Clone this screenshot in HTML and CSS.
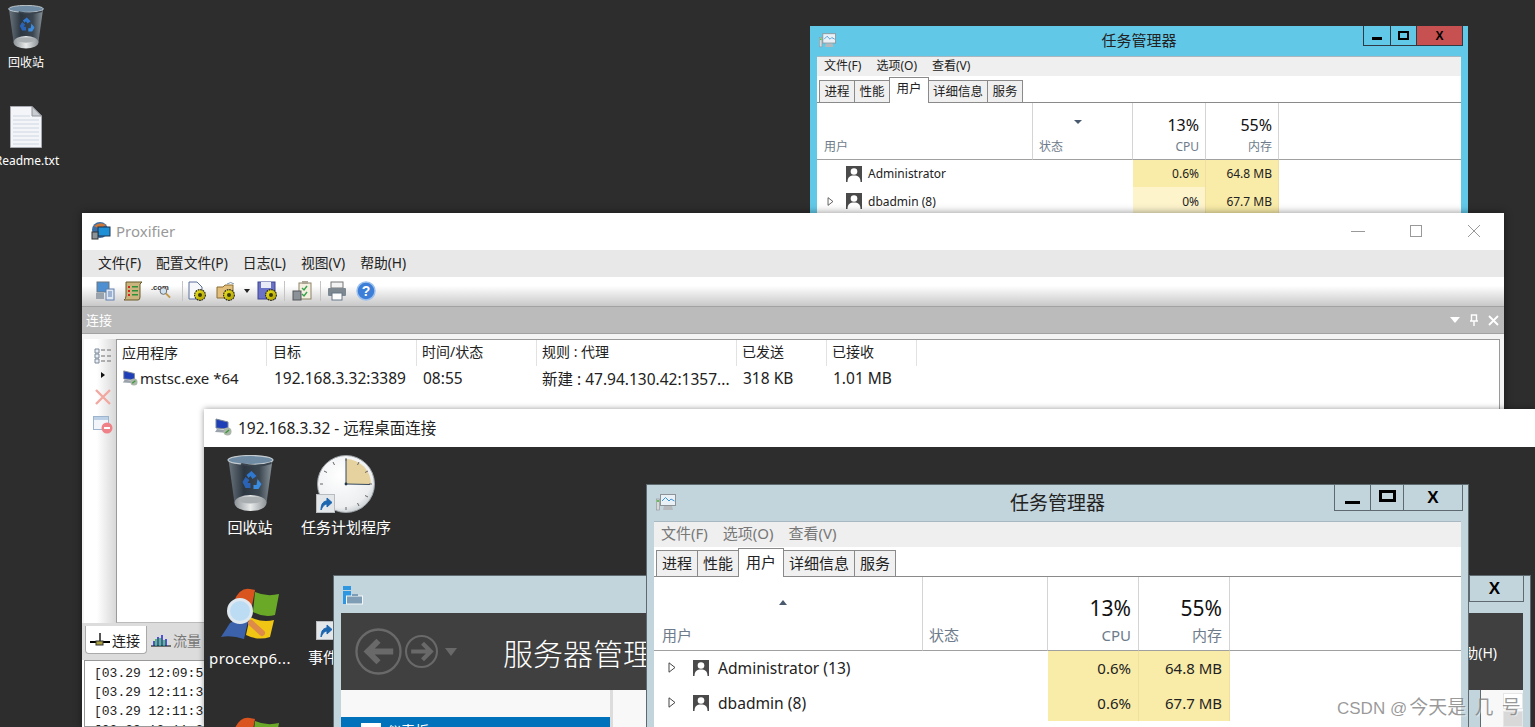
FILE: index.html
```html
<!DOCTYPE html>
<html lang="en">
<head>
    <meta charset="UTF-8">
    <title>远程桌面</title>
    <link rel="stylesheet" href="styles.css">
</head>
<body>
<!-- shared icons -->
<svg class="defs" width="0" height="0">
    <defs>
        <linearGradient id="binBody" x1="0" x2="1" y1="0" y2="0">
            <stop offset="0" stop-color="#6a757e"/><stop offset=".35" stop-color="#2c3640"/><stop offset=".7" stop-color="#3c4650"/><stop offset="1" stop-color="#8a949b"/>
        </linearGradient>
        <linearGradient id="binBase" x1="0" x2="1" y1="0" y2="0">
            <stop offset="0" stop-color="#8d9397"/><stop offset=".5" stop-color="#e9ebeb"/><stop offset="1" stop-color="#8d9397"/>
        </linearGradient>
        <radialGradient id="clockFace" cx=".4" cy=".35" r=".8">
            <stop offset="0" stop-color="#fff"/><stop offset=".7" stop-color="#eceef0"/><stop offset="1" stop-color="#aeb4b9"/>
        </radialGradient>
        <linearGradient id="gearFill" x1="0" x2="1" y1="0" y2="1">
            <stop offset="0" stop-color="#f2ea20"/><stop offset="1" stop-color="#a89a00"/>
        </linearGradient>
        <symbol id="i-bin" viewBox="0 0 46 58">
            <path d="M1 5 L7 48 Q23 60 39 48 L45 5 Z" fill="url(#binBody)"/>
            <ellipse cx="23" cy="48" rx="16" ry="8" fill="url(#binBase)"/>
            <ellipse cx="23" cy="45" rx="12" ry="3.500" fill="#a9aeb1"/>
            <ellipse cx="23" cy="5" rx="22.500" ry="4.500" fill="#6f8ba3" stroke="#c4cbd0" stroke-width="1.200"/>
            <path d="M14 8 Q30 12 44 7 L44 9 Q30 14 13 10 Z" fill="#39444e"/>
            <path d="M19 20 l5 -4 l5 5 l-4 3 l-2 -3 l-2 2 Z" fill="#2f78cf"/>
            <path d="M15 27 l3 -5 l4 3 l-2 3 l3 0 l0 5 l-5 0 Z" fill="#2a63b5"/>
            <path d="M30 24 l4 5 l-3 5 l-5 0 l0 -4 l3 0 Z" fill="#3a8ce0"/>
        </symbol>
        <symbol id="i-clock" viewBox="0 0 58 58">
            <circle cx="29" cy="29" r="28.500" fill="url(#clockFace)" stroke="#9aa0a4"/>
            <path d="M29 4 A25 25 0 0 1 54 29 L29 29 Z" fill="#e6d29e"/>
            <path d="M29 29 L29 4 M29 29 L53 29.500" stroke="#33495c" stroke-width="1" fill="none"/>
            <path d="M29 3v3M29 52v3M3 29h3M52 29h3M16 7l1.500 3M42 7l-1.500 3M7 16l3 1.500M51 16l-3 1.500M7 42l3-1.500M51 42l-3-1.500M16 51l1.500-3M42 51l-1.500-3" stroke="#666" stroke-width="1"/>
            <circle cx="29" cy="29" r="1.400" fill="#22384a"/>
        </symbol>
        <symbol id="i-shortcut" viewBox="0 0 19 19">
            <rect x=".5" y=".5" width="18" height="18" fill="#e4e7ea" stroke="#b8bcc0"/>
            <path d="M5 16 C5 9 8 7 11 7 L11 4 L16 8.500 L11 13 L11 10 C8.500 10 7 12 5 16 Z" fill="#1d66b0" stroke="#1d66b0"/>
        </symbol>
        <symbol id="i-procexp" viewBox="0 0 60 54">
            <path d="M10 36 Q20 30 28 34 L24 52 Q12 48 1 50 Z" fill="#3b62ab"/>
            <path d="M14 14 Q20 0 30 2 Q36 3 35 3 L31 24 Q22 20 12 26 Z" fill="#d9541f"/>
            <path d="M35 5 Q46 10 59 7 L55 28 Q44 31 33 25 Z" fill="#69a927"/>
            <path d="M30 30 Q42 36 54 33 L50 50 Q38 54 26 48 Z" fill="#f0c513"/>
            <circle cx="20" cy="24" r="11.500" fill="#bcdcf4" stroke="#dfe8ee" stroke-width="3"/>
            <path d="M31 36 L42 46" stroke="#dd8a4a" stroke-width="6" stroke-linecap="round"/>
        </symbol>
        <symbol id="i-user" viewBox="0 0 16 16">
            <rect width="16" height="16" fill="#4a4a4a"/>
            <circle cx="8" cy="5.500" r="3.300" fill="#fff"/>
            <path d="M1.500 16 C1.500 11 4 9.500 8 9.500 C12 9.500 14.500 11 14.500 16 Z" fill="#fff"/>
        </symbol>
        <symbol id="i-taskmgr" viewBox="0 0 20 17">
            <rect x="4.500" y=".5" width="15" height="11" fill="#e9f1f6" stroke="#8c9296"/>
            <path d="M6 7 L9.500 3.500 L13 7 L15 5 L18.500 7" stroke="#3b95d6" fill="none"/>
            <rect x=".5" y="5" width="3" height="11" fill="#d8d8d8" stroke="#8c9296" stroke-width=".6"/>
            <rect x="1" y="6" width="2" height="2" fill="#5cc24a"/>
            <path d="M8 12h8l1 4H7z" fill="#b5b9bc"/>
        </symbol>
        <symbol id="i-rdp" viewBox="0 0 18 18">
            <path d="M2 1 L14 4 L14 11 L2 10 Z" fill="#1f3fb8" stroke="#7b8794"/>
            <path d="M3 11 L13 12 L15 15 L1 14 Z" fill="#9aa3ab"/>
            <circle cx="13.500" cy="13.500" r="4" fill="#aab6a8"/>
            <path d="M11.500 15 L15 12" stroke="#3d9a3a" stroke-width="1.400"/>
        </symbol>
        <symbol id="i-chev" viewBox="0 0 8 11">
            <path d="M1 .8 L7 5.500 L1 10.200 Z" fill="#fff" stroke="#444" stroke-width="1"/>
        </symbol>
        <symbol id="i-gear-badge" viewBox="0 0 12 12">
            <circle cx="6" cy="6" r="5.400" fill="url(#gearFill)" stroke="#222" stroke-width="1.100" stroke-dasharray="1.700 .8"/>
            <circle cx="6" cy="6" r="2" fill="#3a3a10"/>
        </symbol>
    </defs>
</svg>

<div class="desktop">
    <!-- host desktop -->
    <div class="desk-icon host-bin">
        <svg class="ico-bin-sm"><use href="#i-bin"/></svg>
        <span class="desk-label">回收站</span>
    </div>
    <div class="desk-icon host-readme">
        <svg class="ico-file" viewBox="0 0 32 42">
            <path d="M.5 .5 H22 L31.500 10 V41.500 H.5 Z" fill="#f3f5f8" stroke="#a8acb2"/>
            <path d="M22 .5 V10 H31.500 Z" fill="#c9ccd1" stroke="#8e9298"/>
            <path d="M3 10H20M3 14H29M3 18H29M3 22H29M3 26H29M3 30H29M3 34H29M3 38H29" stroke="#cfd6e2"/>
        </svg>
        <span class="desk-label">Readme.txt</span>
    </div>

    <!-- task manager on the host, mostly hidden -->
    <div class="tm tm-small tm-host">
        <div class="tm-title">
            <svg class="tm-ico"><use href="#i-taskmgr"/></svg>
            <span class="tm-name">任务管理器</span>
            <div class="tm-btns">
                <span class="tm-btn tm-min"><i class="glyph-min"></i></span>
                <span class="tm-btn tm-max"><i class="glyph-max"></i></span>
                <span class="tm-btn tm-close">X</span>
            </div>
        </div>
        <div class="tm-body">
            <div class="tm-menu"><span>文件(F)</span><span>选项(O)</span><span>查看(V)</span></div>
            <div class="tm-tabs">
                <span class="tm-tab">进程</span><span class="tm-tab">性能</span><span class="tm-tab on">用户</span><span class="tm-tab">详细信息</span><span class="tm-tab">服务</span>
            </div>
            <div class="tm-grid">
                <div class="th th-user"><i class="sort-down"></i><em>用户</em></div>
                <div class="th th-status"><em>状态</em></div>
                <div class="th th-num"><b>13%</b><em>CPU</em></div>
                <div class="th th-num"><b>55%</b><em>内存</em></div>
                <div class="th th-end"></div>

                <div class="td td-user"><span class="chev-gap"></span><svg class="ico-user"><use href="#i-user"/></svg>Administrator</div>
                <div class="td"></div>
                <div class="td td-num heat">0.6%</div>
                <div class="td td-num heat">64.8 MB</div>
                <div class="td"></div>

                <div class="td td-user"><svg class="ico-chev"><use href="#i-chev"/></svg><svg class="ico-user"><use href="#i-user"/></svg>dbadmin (8)</div>
                <div class="td"></div>
                <div class="td td-num heat-low">0%</div>
                <div class="td td-num heat">67.7 MB</div>
                <div class="td"></div>
            </div>
        </div>
    </div>

    <!-- Proxifier -->
    <div class="px">
        <div class="px-title">
            <svg class="px-logo" viewBox="0 0 20 18">
                <circle cx="9" cy="8" r="8" fill="#3a6ea5"/>
                <path d="M3 4 Q9 -1 15 3 L9 7 Z" fill="#c8763a"/>
                <rect x="7" y="5" width="12" height="9" fill="#1c8fd6" stroke="#1f3550"/>
                <rect x="1" y="10" width="6" height="7" fill="#8d9499" stroke="#333"/>
            </svg>
            <span class="px-name">Proxifier</span>
            <div class="px-ctrl">
                <svg viewBox="0 0 14 14"><path d="M0 7.500H14" stroke="#999"/></svg>
                <svg viewBox="0 0 14 14"><rect x="1.500" y="1.500" width="11" height="11" fill="none" stroke="#999"/></svg>
                <svg viewBox="0 0 14 14"><path d="M1 1L13 13M13 1L1 13" stroke="#999"/></svg>
            </div>
        </div>
        <div class="px-menu"><span>文件(F)</span><span>配置文件(P)</span><span>日志(L)</span><span>视图(V)</span><span>帮助(H)</span></div>
        <div class="px-tools">
            <svg class="tool" viewBox="0 0 20 20"><rect x="2" y="1" width="12" height="10" fill="#4d8fd0" stroke="#6b7680"/><rect x="1" y="12" width="8" height="6" fill="#9aa3ab"/><rect x="11" y="8" width="8" height="11" fill="#dfe7f2" stroke="#5f7fb0"/><path d="M13 11h4M13 13h4M13 15h4" stroke="#5f7fb0"/></svg>
            <svg class="tool" viewBox="0 0 20 20"><path d="M3 1H19L17 3V16Q17 19 15 19H1Q3 18 3 15Z" fill="#c9b57d" stroke="#6a5a2a"/><path d="M5 5h2v2H5zM5 9h2v2H5zM5 13h2v2H5z" fill="#d9261c"/><path d="M9 5h6v1.500H9zM9 9h6v1.500H9zM9 13h6v1.500H9z" fill="#2f8f3a"/></svg>
            <svg class="tool tool-wide" viewBox="0 0 22 20"><text x="0" y="9" class="tool-text">.com</text><circle cx="13" cy="10" r="3.500" fill="#cfe2f2" stroke="#666"/><path d="M15.500 12.500L20 17" stroke="#c29a4a" stroke-width="2"/></svg>
            <i class="tool-sep sep-a"></i>
            <svg class="tool" viewBox="0 0 20 20"><path d="M3 1H11L16 6V18H3Z" fill="#f5f7fb" stroke="#5b6f9a"/><use href="#i-gear-badge" x="8" y="8" width="12" height="12"/></svg>
            <svg class="tool tool-folder" viewBox="0 0 20 20"><path d="M1 6H7L9 4H17V17H1Z" fill="#e2bf7a" stroke="#8a6d35"/><path d="M11 3Q15 0 18 3" stroke="#7f93a8" fill="none"/><use href="#i-gear-badge" x="7" y="8" width="12" height="12"/></svg>
            <i class="tool-drop"></i>
            <svg class="tool" viewBox="0 0 20 20"><rect x="1" y="1" width="17" height="17" fill="#6a72c8" stroke="#3c4390"/><rect x="4" y="1" width="10" height="6" fill="#e8eaf6"/><use href="#i-gear-badge" x="8" y="8" width="12" height="12"/></svg>
            <i class="tool-sep sep-b"></i>
            <svg class="tool" viewBox="0 0 20 20"><rect x="7" y="2" width="12" height="16" fill="#f4efe0" stroke="#8a8266"/><rect x="10" y="0" width="6" height="3" fill="#a9a493"/><path d="M10 7l2 2 3-4M10 13l2 2 3-4" stroke="#34a34a" fill="none" stroke-width="1.400"/><rect x="1" y="10" width="8" height="9" fill="#8b9298" stroke="#55595c"/></svg>
            <i class="tool-sep sep-c"></i>
            <svg class="tool" viewBox="0 0 20 20"><rect x="4" y="1" width="12" height="6" fill="#f3f3f3" stroke="#777"/><rect x="1" y="7" width="18" height="8" rx="1" fill="#7d8890"/><rect x="5" y="12" width="10" height="7" fill="#fff" stroke="#678"/></svg>
            <svg class="tool tool-help-ico" viewBox="0 0 20 20"><circle cx="10" cy="10" r="9" fill="#3c7ed8" stroke="#9cc0ec" stroke-width="1.500"/><text x="10" y="15" class="tool-help">?</text></svg>
        </div>
        <div class="px-head">
            <span class="px-head-name">连接</span>
            <i class="head-tri"></i>
            <svg class="head-pin" viewBox="0 0 10 12"><path d="M2.500 1H7.500V7H2.500ZM1 7H9M5 7V12" stroke="#fff" stroke-width="1.400" fill="none"/></svg>
            <svg class="head-x" viewBox="0 0 11 11"><path d="M1 1L10 10M10 1L1 10" stroke="#fff" stroke-width="1.800"/></svg>
        </div>
        <div class="px-main">
            <div class="px-side">
                <svg class="side-list" viewBox="0 0 18 16"><path d="M1 1h4v4H1zM1 6h4v4H1zM1 11h4v4H1z" fill="#e8eef5" stroke="#7c8a9a"/><path d="M7 2h4M13 2h4M7 8h4M13 8h4M7 13h4M13 13h4" stroke="#6d6d6d"/></svg>
                <i class="side-tri"></i>
                <svg class="side-x" viewBox="0 0 16 16"><path d="M1 1L15 15M15 1L1 15" stroke="#f0a8a0" stroke-width="2.400"/></svg>
                <svg class="side-stop" viewBox="0 0 20 18"><rect x=".5" y=".5" width="15" height="13" fill="#f2f6fb" stroke="#9db4cf"/><rect x="1" y="1" width="14" height="3" fill="#bcd0e6"/><circle cx="14" cy="12" r="5.500" fill="#ee8288"/><path d="M11 12h6" stroke="#fff" stroke-width="2"/></svg>
            </div>
            <div class="px-list">
                <div class="px-row px-row-head">
                    <span class="c-app">应用程序</span><span class="c-dst">目标</span><span class="c-time">时间/状态</span><span class="c-rule">规则 : 代理</span><span class="c-sent">已发送</span><span class="c-recv">已接收</span>
                </div>
                <div class="px-row px-row-data">
                    <span class="c-app"><svg class="ico-rdp-sm"><use href="#i-rdp"/></svg>mstsc.exe *64</span><span class="c-dst">192.168.3.32:3389</span><span class="c-time">08:55</span><span class="c-rule">新建 : 47.94.130.42:1357...</span><span class="c-sent">318 KB</span><span class="c-recv">1.01 MB</span>
                </div>
            </div>
        </div>
        <div class="px-tabs">
            <span class="px-tab on">
                <svg class="tab-ico" viewBox="0 0 20 14"><path d="M0 9H20" stroke="#000" stroke-width="2"/><path d="M10 0V9" stroke="#555" stroke-width="2"/><rect x="6" y="8" width="7" height="4" fill="#a8a040" stroke="#333"/></svg>连接
            </span>
            <span class="px-tab">
                <svg class="tab-ico" viewBox="0 0 20 14"><path d="M0 13H20" stroke="#000"/><path d="M3 13V8M7 13V4M11 13V2M15 13V6" stroke="#1515e0" stroke-width="1.400"/><path d="M5 13V6M9 13V5M13 13V7" stroke="#18c018" stroke-width="1.400"/></svg>流量
            </span>
        </div>
        <div class="px-log">
            <div>[03.29 12:09:5</div>
            <div>[03.29 12:11:3</div>
            <div>[03.29 12:11:3</div>
            <div>[03.29 12:11:3</div>
        </div>
    </div>

    <!-- remote desktop window -->
    <div class="rdp">
        <div class="rdp-title">
            <svg class="ico-rdp"><use href="#i-rdp"/></svg>
            <span>192.168.3.32 - 远程桌面连接</span>
        </div>
    </div>

    <div class="desk-icon rdp-bin">
        <svg class="ico-bin-lg"><use href="#i-bin"/></svg>
        <span class="desk-label">回收站</span>
    </div>
    <div class="desk-icon rdp-clock">
        <span class="ico-wrap">
            <svg class="ico-clock"><use href="#i-clock"/></svg>
            <svg class="ico-short"><use href="#i-shortcut"/></svg>
        </span>
        <span class="desk-label">任务计划程序</span>
    </div>
    <div class="desk-icon rdp-procexp">
        <svg class="ico-procexp"><use href="#i-procexp"/></svg>
        <span class="desk-label">procexp6...</span>
    </div>
    <div class="desk-icon rdp-event">
        <span class="ico-wrap ico-wrap-event">
            <svg class="ico-short"><use href="#i-shortcut"/></svg>
        </span>
        <span class="desk-label">事件查看器</span>
    </div>
    <div class="desk-icon rdp-procexp2">
        <svg class="ico-procexp"><use href="#i-procexp"/></svg>
    </div>

    <!-- server manager behind the remote task manager -->
    <div class="sm">
        <div class="sm-title">
            <svg class="sm-ico" viewBox="0 0 20 20">
                <rect x="0" y="1" width="8" height="4" fill="#2f96e0"/>
                <rect x="0" y="6" width="8" height="13" fill="#2f96e0"/>
                <rect x="3.500" y="11" width="16" height="8" fill="#7f9db5" stroke="#f4f7f9"/>
                <rect x="9" y="9" width="6" height="2" fill="#7f9db5"/>
            </svg>
            <span class="sm-close">X</span>
        </div>
        <div class="sm-head">
            <svg class="sm-back" viewBox="0 0 48 48"><circle cx="24" cy="24" r="22.500" fill="none" stroke="#696969" stroke-width="2.400"/><path d="M14 24H39M24 13L13 24L24 35" fill="none" stroke="#696969" stroke-width="6"/></svg>
            <svg class="sm-fwd" viewBox="0 0 32 32"><circle cx="16" cy="16" r="15" fill="none" stroke="#696969" stroke-width="2"/><path d="M6 16H25M17 8L25 16L17 24" fill="none" stroke="#696969" stroke-width="4"/></svg>
            <i class="sm-drop"></i>
            <span class="sm-name">服务器管理器</span>
            <span class="sm-help">帮助(H)</span>
        </div>
        <div class="sm-body">
            <div class="sm-nav">
                <div class="sm-nav-item"><i class="sm-nav-ico"></i>仪表板</div>
            </div>
            <div class="sm-right">
                <span class="sm-peek"></span>
                <span class="sm-scroll"><i></i><i></i></span>
            </div>
        </div>
    </div>

    <!-- task manager inside the remote session -->
    <div class="tm tm-big tm-rdp">
        <div class="tm-title">
            <svg class="tm-ico"><use href="#i-taskmgr"/></svg>
            <span class="tm-name">任务管理器</span>
            <div class="tm-btns">
                <span class="tm-btn tm-min"><i class="glyph-min"></i></span>
                <span class="tm-btn tm-max"><i class="glyph-max"></i></span>
                <span class="tm-btn tm-close">X</span>
            </div>
        </div>
        <div class="tm-body">
            <div class="tm-menu"><span>文件(F)</span><span>选项(O)</span><span>查看(V)</span></div>
            <div class="tm-tabs">
                <span class="tm-tab">进程</span><span class="tm-tab">性能</span><span class="tm-tab on">用户</span><span class="tm-tab">详细信息</span><span class="tm-tab">服务</span>
            </div>
            <div class="tm-grid">
                <div class="th th-user"><i class="sort-up"></i><em>用户</em></div>
                <div class="th th-status"><em>状态</em></div>
                <div class="th th-num"><b>13%</b><em>CPU</em></div>
                <div class="th th-num"><b>55%</b><em>内存</em></div>
                <div class="th th-end"></div>

                <div class="td td-user"><svg class="ico-chev"><use href="#i-chev"/></svg><svg class="ico-user"><use href="#i-user"/></svg>Administrator (13)</div>
                <div class="td"></div>
                <div class="td td-num heat">0.6%</div>
                <div class="td td-num heat">64.8 MB</div>
                <div class="td"></div>

                <div class="td td-user"><svg class="ico-chev"><use href="#i-chev"/></svg><svg class="ico-user"><use href="#i-user"/></svg>dbadmin (8)</div>
                <div class="td"></div>
                <div class="td td-num heat">0.6%</div>
                <div class="td td-num heat">67.7 MB</div>
                <div class="td"></div>
            </div>
        </div>
    </div>

    <div class="watermark">CSDN @<span class="wm-cjk">今天是 几 号</span></div>
</div>
</body>
</html>
```

FILE: styles.css
```css
html, body {margin:0;padding:0;overflow:hidden;}
body {background:#2d2d2d;font-family:"Noto Sans","Noto Sans CJK SC",sans-serif;color:#222;}
.defs {position:absolute;}
.desktop {position:relative;width:1535px;height:727px;overflow:hidden;background:#2d2d2d;}

/* desktop icons */
.desk-icon {position:absolute;display:flex;flex-direction:column;align-items:center;}
.desk-label {color:#fff;white-space:nowrap;line-height:18px;}
.host-bin {left:0;top:5px;width:52px;font-size:12px;}
.host-bin .desk-label {margin-top:4px;}
.host-readme {left:-5px;top:106px;width:64px;font-size:12px;}
.host-readme .desk-label {margin-top:4px;}
.host-readme .ico-file {margin-right:2px;}
.ico-bin-sm {width:36px;height:45px;}
.ico-file {width:32px;height:42px;}

.rdp-bin {left:205px;top:455px;width:90px;font-size:15px;}
.rdp-bin .desk-label {margin-top:5px;}
.rdp-clock {left:296px;top:455px;width:100px;font-size:15px;}
.rdp-clock .desk-label {margin-top:5px;}
.rdp-procexp {left:204px;top:587px;width:92px;font-size:15px;}
.rdp-procexp .desk-label {margin-top:8px;letter-spacing:.4px;}
.rdp-event {left:300px;top:587px;width:64px;font-size:15px;align-items:flex-start;}
.rdp-event .desk-label {margin-top:8px;margin-left:8px;}
.rdp-procexp2 {left:204px;top:716px;width:92px;}
.ico-bin-lg {width:47px;height:58px;}
.ico-clock {width:58px;height:58px;display:block;}
.ico-wrap {position:relative;display:block;width:58px;height:58px;}
.ico-wrap-event {height:53px;width:34px;}
.ico-short {position:absolute;left:-1px;bottom:0;width:19px;height:19px;}
.ico-wrap-event .ico-short {left:16px;bottom:0;}
.ico-procexp {width:60px;height:54px;}

/* task manager */
.tm {position:absolute;display:flex;flex-direction:column;box-sizing:border-box;}
.tm-title {position:relative;flex:none;display:flex;align-items:center;justify-content:center;}
.tm-ico {position:absolute;}
.tm-name {color:#222;}
.tm-btns {position:absolute;top:0;display:flex;box-sizing:border-box;}
.tm-btn {box-sizing:border-box;display:flex;align-items:center;justify-content:center;color:#000;font-weight:700;font-family:"Liberation Sans",sans-serif;}
.tm-body {flex:1;background:#fff;display:flex;flex-direction:column;min-height:0;}
.tm-menu {flex:none;display:flex;background:#efefef;align-items:center;box-sizing:border-box;}
.tm-tabs {flex:none;display:flex;align-items:flex-end;border-bottom:1px solid #8a8a8a;}
.tm-tab {box-sizing:border-box;border:1px solid #8a8a8a;border-bottom:0;margin-right:-1px;background:#f0f0f0;text-align:center;white-space:nowrap;position:relative;}
.tm-tab.on {background:#fff;margin-bottom:-1px;z-index:1;}
.tm-grid {flex:none;display:grid;}
.th {position:relative;box-sizing:border-box;border-right:1px solid #d4d4d4;border-bottom:1px solid #a0a0a0;display:flex;flex-direction:column;justify-content:flex-end;}
.th em {font-style:normal;color:#6d7b8a;}
.th b {font-weight:400;color:#111;}
.th-num {align-items:flex-end;}
.th-end {border-right:0;}
.td {box-sizing:border-box;display:flex;align-items:center;white-space:nowrap;color:#222;}
.td-num {justify-content:flex-end;}
.heat {background:#f9eca8;border-right:1px solid #f0dfa0;}
.heat-low {background:#fdf4cc;border-right:1px solid #f0dfa0;}
.sort-down, .sort-up {position:absolute;width:0;height:0;border-left:4.500px solid transparent;border-right:4.500px solid transparent;}
.sort-down {border-top:4.500px solid #4a5a6e;}
.sort-up {border-bottom:5px solid #4a5a6e;}
.ico-user, .ico-chev {flex:none;}

.tm-small {font-size:12px;}
.tm-host {left:810px;top:26px;width:658px;height:190px;background:#62c8e8;}
.tm-small .tm-title {height:30px;}
.tm-small .tm-ico {left:9px;top:7px;width:17px;height:15px;}
.tm-small .tm-name {font-size:15px;padding-bottom:3px;}
.tm-small .tm-btns {right:5px;border:1px solid #2f3a44;border-top:0;height:20px;}
.tm-small .tm-btn {height:19px;}
.tm-small .tm-min {width:27px;border-right:1px solid #2f3a44;}
.tm-small .tm-max {width:26px;border-right:1px solid #2f3a44;}
.tm-small .tm-close {width:45px;background:#c75050;font-size:12px;}
.tm-small .glyph-min {display:block;width:10px;height:3px;background:#000;margin-top:5px;}
.tm-small .glyph-max {display:block;width:7px;height:5px;border:2px solid #000;}
.tm-small .tm-body {margin:0 7px;border-top:1px solid #a9b8c0;}
.tm-small .tm-menu {height:19px;padding:0 0 3px 7px;gap:15px;}
.tm-small .tm-tabs {height:26px;padding-left:2px;font-size:12.500px;}
.tm-small .tm-tab {height:22px;line-height:22px;padding:0 4px;min-width:36px;}
.tm-small .tm-tab.on {height:26px;line-height:22px;min-width:40px;padding-bottom:3px;}
.tm-small .tm-grid {grid-template-columns:216px 100px 73px 73px 1fr;grid-template-rows:57px 27px 28px;}
.tm-small .th {padding:0 6px 4px 6px;}
.tm-small .th b {font-size:16px;line-height:20px;margin-bottom:3px;}
.tm-small .th em {font-size:12px;line-height:17px;}
.tm-small .sort-down {left:257px;top:17px;}
.tm-small .td {font-size:12px;}
.tm-small .td-num {padding-right:6px;}
.tm-small .td-user {padding-left:10px;}
.tm-small .ico-chev {width:7px;height:9px;margin-right:9px;}
.tm-small .chev-gap {width:16px;}
.tm-small .ico-user {width:16px;height:16px;margin-right:6px;margin-left:3px;}
.tm-small .th-user {padding-left:7px;}

.tm-big {font-size:14px;}
.tm-rdp {left:646px;top:484px;width:823px;height:243px;background:#c3d5dc;border:1px solid #5f6a70;border-bottom:0;}
.tm-big .tm-title {height:36px;}
.tm-big .tm-ico {left:9px;top:9px;width:20px;height:17px;}
.tm-big .tm-name {font-size:19px;padding-bottom:2px;}
.tm-big .tm-btns {right:5px;border:1px solid #5f6a70;border-top:0;height:26px;}
.tm-big .tm-btn {height:25px;}
.tm-big .tm-min {width:36px;border-right:1px solid #5f6a70;}
.tm-big .tm-max {width:33px;border-right:1px solid #5f6a70;}
.tm-big .tm-close {width:58px;font-size:17px;}
.tm-big .glyph-min {display:block;width:15px;height:3px;background:#000;margin-top:9px;}
.tm-big .glyph-max {display:block;width:11px;height:6px;border:3px solid #000;margin-top:-4px;}
.tm-big .tm-body {margin:0 7px;border-top:1px solid #a9b8c0;}
.tm-big .tm-menu {height:25px;padding:0 0 5px 7px;gap:15px;color:#777;font-size:15px;}
.tm-big .tm-tabs {height:29px;padding-left:2px;font-size:15px;}
.tm-big .tm-tab {height:26px;line-height:25px;min-width:42px;padding:0 5px;}
.tm-big .tm-tab.on {height:29px;line-height:26px;min-width:46px;padding-bottom:2px;}
.tm-big .tm-grid {grid-template-columns:269px 125px 91px 91px 1fr;grid-template-rows:74px 35px 35px;}
.tm-big .th {padding:0 7px 5px 8px;}
.tm-big .th-status {padding-left:6px;}
.tm-big .th-num {padding-right:7px;}
.tm-big .th b {font-size:21px;line-height:24px;margin-bottom:5px;}
.tm-big .th em {font-size:15px;line-height:20px;}
.tm-big .sort-up {left:125px;top:23px;}
.tm-big .td {font-size:15.600px;padding-bottom:2px;}
.tm-big .td-num {padding-right:7px;font-size:15px;}
.tm-big .td-user {padding-left:14px;}
.tm-big .ico-chev {width:8px;height:11px;margin-right:17px;}
.tm-big .ico-user {width:16px;height:16px;margin-right:9px;}

/* proxifier */
.px {position:absolute;left:82px;top:213px;width:1422px;height:514px;background:#fff;display:flex;flex-direction:column;box-shadow:0 0 8px rgba(0,0,0,.45);}
.px-title {flex:none;height:37px;display:flex;align-items:center;padding:0 0 2px 9px;box-sizing:border-box;position:relative;}
.px-logo {width:20px;height:18px;margin-right:5px;}
.px-name {font-size:15px;color:#999;}
.px-ctrl {margin-left:auto;display:flex;gap:44px;padding-right:23px;}
.px-ctrl svg {width:14px;height:14px;}
.px-menu {flex:none;height:27px;background:#e8e8e8;display:flex;align-items:center;padding:0 0 4px 16px;gap:15px;font-size:13.800px;box-sizing:border-box;}
.px-tools {flex:none;height:29px;box-sizing:border-box;padding:0 0 2px 13px;display:flex;align-items:center;gap:8px;background:linear-gradient(#fff 30%,#c8c8c8);}
.tool {width:20px;height:20px;}
.tool-wide {width:21px;}
.tool-folder {margin-left:2px;}
.tool-help-ico {margin-left:1px;}
.tool-text {font-family:"Liberation Sans",sans-serif;font-size:8px;font-weight:700;fill:#333;}
.tool-help {font-family:"Liberation Sans",sans-serif;font-size:14px;font-weight:700;fill:#fff;text-anchor:middle;}
.tool-sep {width:1px;height:20px;background:#c4c4c4;}
.sep-a {margin:0 -5px 0 2px;}
.sep-b {margin:0 -1px 0 -1px;}
.sep-c {margin:0 -2px 0 0;}
.tool-drop {width:0;height:0;border-left:3.500px solid transparent;border-right:3.500px solid transparent;border-top:4px solid #222;margin:0 -1px 0 0;}
.px-head {flex:none;height:28px;box-sizing:border-box;background:#bbb;border-top:1px solid #a2a2a2;border-bottom:1px solid #a2a2a2;display:flex;align-items:center;padding:0 5px 0 4px;color:#fff;font-size:13px;}
.px-head-name {margin:-2px auto 0 0;}
.head-tri {width:0;height:0;border-left:5.500px solid transparent;border-right:5.500px solid transparent;border-top:6px solid #fff;margin-right:9px;}
.head-pin {width:10px;height:12px;margin-right:9px;}
.head-x {width:11px;height:11px;}
.px-main {flex:none;height:289px;box-sizing:border-box;padding:5px 4px 0 2px;display:flex;background:#f4f4f4;}
.px-side {flex:none;width:32px;background:linear-gradient(to right,#fff 40%,#d8d8d8);display:flex;flex-direction:column;align-items:center;padding-left:6px;box-sizing:border-box;}
.side-list {width:18px;height:16px;margin-top:9px;}
.side-tri {width:0;height:0;border-top:3.500px solid transparent;border-bottom:3.500px solid transparent;border-left:4px solid #111;margin-top:8px;}
.side-x {width:16px;height:16px;margin-top:11px;}
.side-stop {width:20px;height:18px;margin-top:11px;}
.px-list {flex:1;background:#fff;border:1px solid #9a9a9a;border-bottom-color:#bbb;}
.px-row {display:grid;grid-template-columns:150px 150px 120px 200px 90px 90px;height:26px;font-size:15.500px;align-items:center;white-space:nowrap;}
.px-row span {padding-left:5px;overflow:hidden;}
.px-row-data {padding-bottom:2px;box-sizing:border-box;}
.px-row-data .c-dst {padding-left:7px;}
.px-row-data .c-time, .px-row-data .c-sent, .px-row-data .c-recv {padding-left:6px;}
.px-row-data .c-app {font-size:15px;}
.px-row-head {font-size:14px;box-sizing:border-box;}
.px-row-head span {height:26px;line-height:24px;padding-left:5px;border-right:1px solid #e2e2e2;box-sizing:border-box;}
.px-row-head .c-dst {padding-left:6px;}
.px-row .c-app {display:flex;align-items:center;}
.ico-rdp-sm {width:16px;height:16px;margin-right:2px;flex:none;}
.px-tabs {flex:none;height:37px;background:#dcdcdc;display:flex;padding:3px 0 0 3px;box-sizing:border-box;font-size:14px;color:#777;}
.px-tab {height:28px;box-sizing:border-box;display:flex;align-items:center;padding:0 6px 0 4px;}
.px-tab.on {background:#fff;color:#222;border:1px solid #aaa;border-top:0;border-radius:0 0 4px 4px;}
.tab-ico {width:20px;height:14px;margin-right:2px;}
.px-log {flex:1;margin-left:2px;background:#fff;border:1px solid #999;font:13px/19px "Liberation Mono",monospace;padding:3px 0 0 9px;overflow:hidden;color:#222;}

/* remote desktop */
.rdp {position:absolute;left:204px;top:409px;width:1331px;height:318px;background:#2d2d2d;box-shadow:0 0 6px rgba(0,0,0,.4);}
.rdp-title {height:38px;box-sizing:border-box;padding:0 0 2px 10px;background:#fff;display:flex;align-items:center;font-size:15.500px;color:#222;}
.ico-rdp {width:18px;height:18px;margin-right:6px;}

/* server manager */
.sm {position:absolute;left:333px;top:575px;width:1198px;height:152px;box-sizing:border-box;background:#c3d5dc;border:1px solid #5f6a70;border-bottom:0;display:flex;flex-direction:column;padding:0 7px;}
.sm-title {flex:none;height:37px;display:flex;align-items:flex-start;position:relative;}
.sm-ico {width:20px;height:20px;margin:9px 0 0 2px;}
.sm-close {margin-left:auto;width:55px;height:26px;box-sizing:border-box;border:1px solid #5f6a70;border-top:0;padding:1px 4px 0 0;display:flex;align-items:center;justify-content:center;font:700 17px "Liberation Sans",sans-serif;color:#000;margin-right:-1px;}
.sm-head {flex:none;height:77px;background:#404040;display:flex;align-items:center;padding-left:14px;color:#fff;}
.sm-back {width:47px;height:47px;}
.sm-fwd {width:33px;height:33px;margin-left:3px;}
.sm-drop {width:0;height:0;border-left:6.500px solid transparent;border-right:6.500px solid transparent;border-top:8px solid #696969;margin-left:7px;}
.sm-name {font-size:30px;font-weight:300;margin-left:46px;white-space:nowrap;}
.sm-help {margin-left:auto;font-size:14px;margin-right:26px;}
.sm-body {flex:1;display:flex;background:#f8f8f8;min-height:0;}
.sm-nav {width:269px;background:#f8f8f8;padding-top:27px;border-right:3px solid #dcdcdc;box-sizing:content-box;}
.sm-nav-item {height:30px;background:#0072bc;color:#fff;font-size:14px;display:flex;padding:3px 0 0 20px;box-sizing:border-box;gap:6px;}
.sm-nav-ico {width:20px;height:6px;background:#fff;margin-top:3px;}
.sm-right {flex:1;display:flex;justify-content:flex-end;gap:22px;}
.sm-peek {width:11px;background:#c3d5dc;border-right:1px solid #5f6a70;}
.sm-scroll {display:flex;flex-direction:column;width:20px;gap:2px;padding-top:3px;}
.sm-scroll i {display:block;height:19px;background:#fff;border:1px solid #e6e6e6;box-sizing:border-box;}
.sm-scroll i + i {height:20px;background:#d8d8d8;}

.watermark {position:absolute;left:1337px;top:695px;font-size:17px;line-height:25px;color:rgba(120,120,120,.75);text-shadow:1px 1px 1px rgba(255,255,255,.5);font-family:"Liberation Sans","Noto Sans CJK SC",sans-serif;white-space:nowrap;}
.wm-cjk {font-size:19px;word-spacing:3px;margin-left:2px;}
```
